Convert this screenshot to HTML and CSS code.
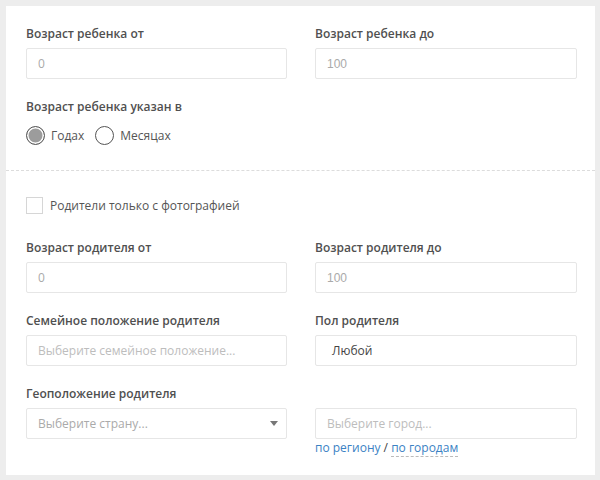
FILE: index.html
```html
<!DOCTYPE html>
<html lang="ru">
<head>
<meta charset="utf-8">
<link rel="stylesheet" href="styles.css">
</head>
<body>
<div class="card">
  <div class="section top">
    <div class="grid">
      <div class="field">
        <div class="label">Возраст ребенка от</div>
        <input class="input" type="text" placeholder="0">
      </div>
      <div class="field">
        <div class="label">Возраст ребенка до</div>
        <input class="input arial" type="text" placeholder="100">
      </div>
      <div class="field">
        <div class="label">Возраст ребенка указан в</div>
        <div class="radios">
          <label class="radio-item"><span class="radio checked"></span>Годах</label>
          <label class="radio-item"><span class="radio"></span>Месяцах</label>
        </div>
      </div>
    </div>
  </div>
  <div class="divider"></div>
  <div class="section bottom">
    <label class="check-row"><span class="checkbox"></span>Родители только с фотографией</label>
    <div class="grid">
      <div class="field">
        <div class="label">Возраст родителя от</div>
        <input class="input" type="text" placeholder="0">
      </div>
      <div class="field">
        <div class="label">Возраст родителя до</div>
        <input class="input arial" type="text" placeholder="100">
      </div>
      <div class="field">
        <div class="label">Семейное положение родителя</div>
        <input class="input light" type="text" placeholder="Выберите семейное положение...">
      </div>
      <div class="field">
        <div class="label">Пол родителя</div>
        <div class="input value">Любой</div>
      </div>
      <div class="field">
        <div class="label">Геоположение родителя</div>
        <div class="input select"><span class="ph">Выберите страну...</span><span class="arrow"></span></div>
      </div>
      <div class="field">
        <div class="label">&nbsp;</div>
        <input class="input light" type="text" placeholder="Выберите город...">
        <div class="links"><a class="link">по региону</a> <span class="slash">/</span> <a class="link dotted">по городам</a></div>
      </div>
    </div>
  </div>
</div>
</body>
</html>
```
FILE: styles.css
```css
* { box-sizing: border-box; }
html, body { margin: 0; padding: 0; }
body {
  background: #ededed;
  font-family: "Open Sans", "Liberation Sans", sans-serif;
  font-size: 12px;
  color: #555;
  padding: 6px 5px 5px 6px;
  height: 480px;
}
.card {
  background: #fff;
  width: 589px;
  height: 469px;
}
.section.top { padding: 19px 18px 26px 20px; }
.section.bottom { padding: 26px 18px 0 20px; }
.grid {
  display: grid;
  grid-template-columns: 261px 262px;
  column-gap: 28px;
  row-gap: 19px;
}
.field { display: flex; flex-direction: column; }
.label {
  font-weight: 600;
  line-height: 18px;
  margin-bottom: 5px;
  color: #505050;
  font-size: 12px;
}
.input {
  height: 31px;
  border: 1px solid #e6e6e6;
  border-radius: 2px;
  padding: 0 11px;
  font-family: "Open Sans", "Liberation Sans", sans-serif;
  font-size: 12px;
  color: #444;
  background: #fff;
  outline: none;
  width: 100%;
  display: flex;
  align-items: center;
}
.input::placeholder { color: #aaa; }
.input.light::placeholder { color: #bdbdbd; }
.input.arial { font-family: "Liberation Sans", Arial, sans-serif; }
.input.arial::placeholder { color: #aaa; }
.input.value { padding-left: 16px; color: #444; }
.input.select { justify-content: space-between; padding-right: 8px; }
.input.select .ph { color: #aaa; }
.arrow {
  width: 0; height: 0;
  border-left: 4px solid transparent;
  border-right: 4px solid transparent;
  border-top: 5px solid #777;
}
.radios {
  display: flex;
  gap: 11px;
  margin-top: 6px;
  height: 17px;
  align-items: center;
}
.radio-item { display: flex; align-items: center; gap: 6px; line-height: 18px; color: #555; }
.radio {
  width: 19px; height: 19px;
  border-radius: 50%;
  border: 1.5px solid #555;
  background: #fff;
  display: inline-block;
}
.radio.checked { background: #9c9c9c; box-shadow: inset 0 0 0 1.5px #fff; border-color: #5a5a5a; }
.divider { border-top: 1px dashed #dcdcdc; height: 0; }
.check-row {
  display: flex; align-items: center; gap: 7px;
  height: 17px;
  margin-bottom: 25px;
  color: #555;
}
.checkbox {
  width: 17px; height: 17px;
  border: 1px solid #d6d6d6;
  background: #fff;
  display: inline-block;
}
.links { margin-top: 0; line-height: 18px; }
.link { color: #3b82c4; text-decoration: none; }
.link.dotted { border-bottom: 1px dashed #bbb; }
.slash { color: #444; }
```
